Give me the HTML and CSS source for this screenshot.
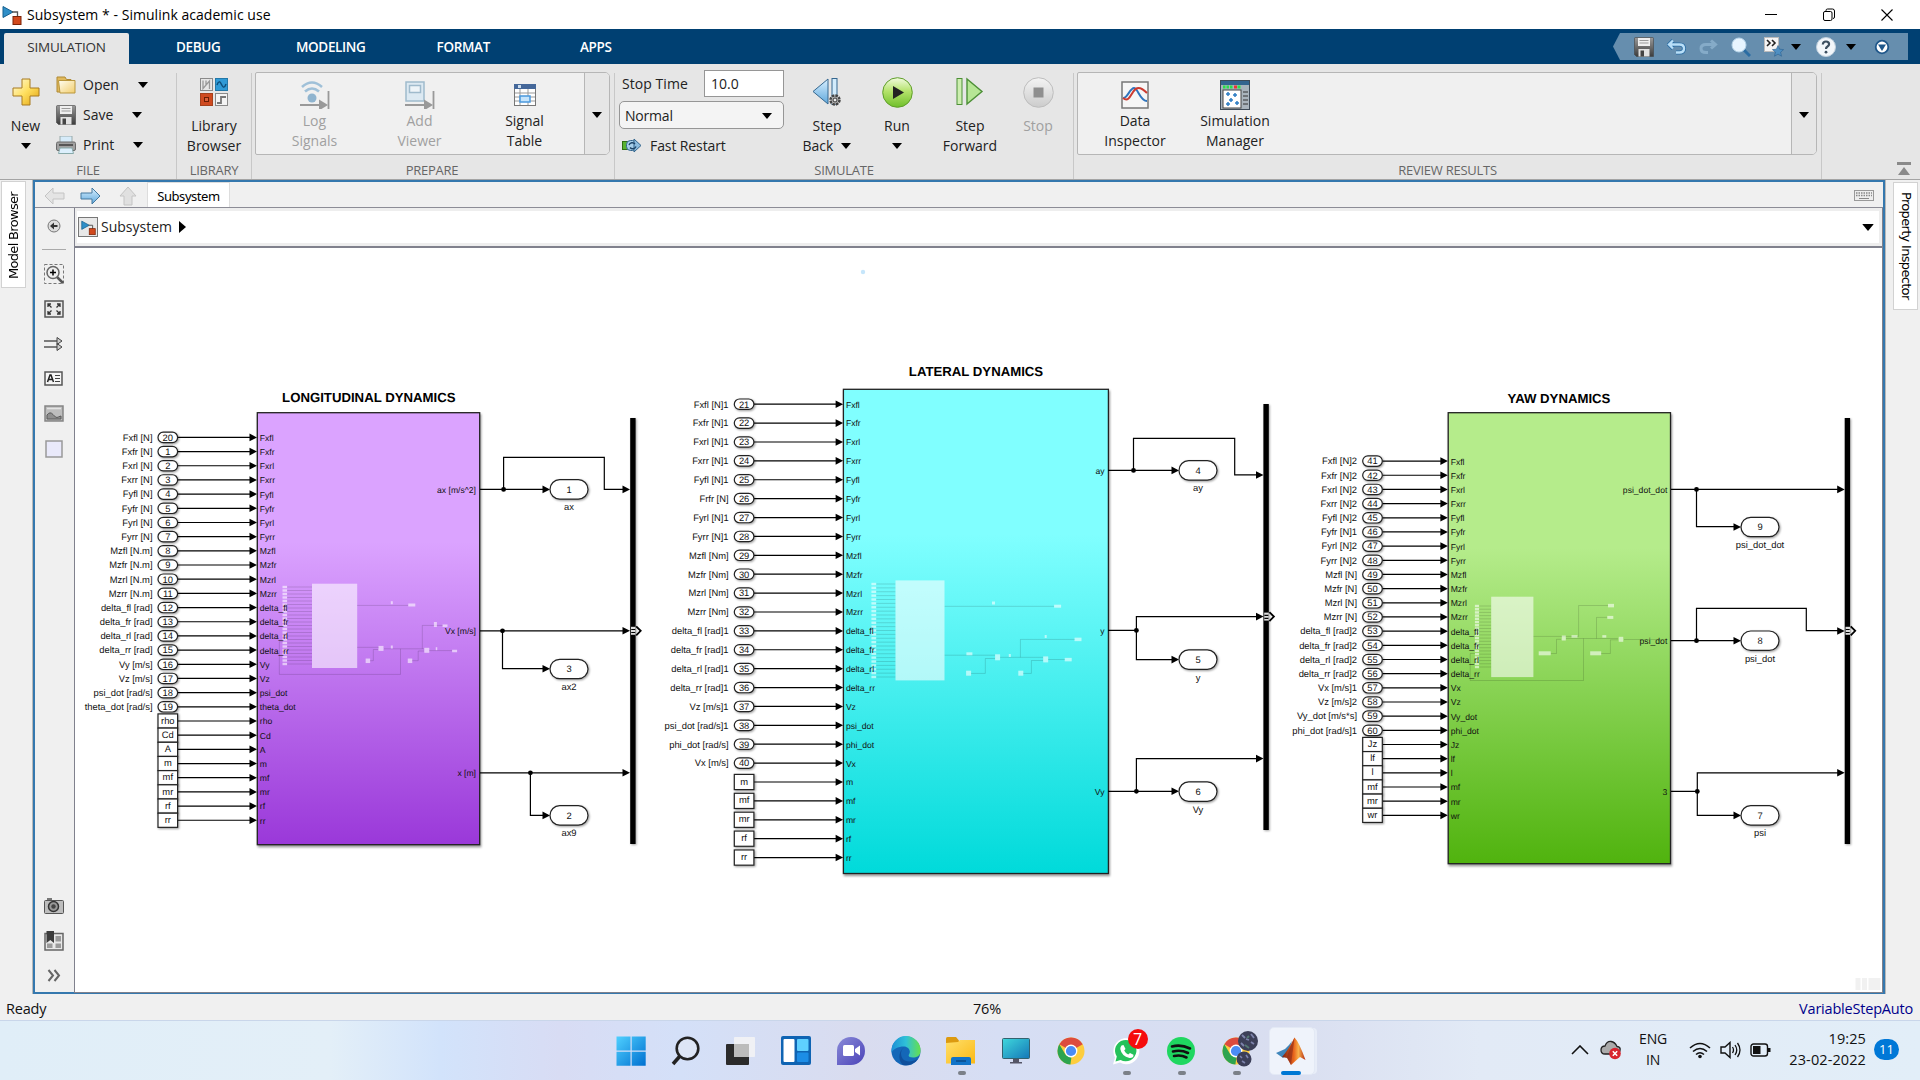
FILE: index.html
```html
<!DOCTYPE html>
<html lang="en">
<head>
<meta charset="utf-8">
<title>Subsystem * - Simulink academic use</title>
<link rel="stylesheet" href="styles.css">
</head>
<body>
<svg class="defs" width="0" height="0">
  <defs>
    <linearGradient id="gold" x1="0" y1="0" x2="1" y2="1"><stop offset="0" stop-color="#fffbe0"/><stop offset=".5" stop-color="#ffdf5e"/><stop offset="1" stop-color="#e0a010"/></linearGradient>
    <linearGradient id="cream" x1="0" y1="0" x2="1" y2="1"><stop offset="0" stop-color="#fffef2"/><stop offset="1" stop-color="#f2cd6c"/></linearGradient>
    <linearGradient id="steel" x1="0" y1="0" x2="0" y2="1"><stop offset="0" stop-color="#9a9a9a"/><stop offset="1" stop-color="#3c3c3c"/></linearGradient>
    <linearGradient id="sky" x1="0" y1="0" x2="0" y2="1"><stop offset="0" stop-color="#d8efff"/><stop offset="1" stop-color="#5fa8dc"/></linearGradient>
    <linearGradient id="lime" x1="0" y1="0" x2="0" y2="1"><stop offset="0" stop-color="#f2fbe0"/><stop offset=".45" stop-color="#b5e36c"/><stop offset="1" stop-color="#6fbf2a"/></linearGradient>
    <linearGradient id="ash" x1="0" y1="0" x2="0" y2="1"><stop offset="0" stop-color="#f4f4f4"/><stop offset="1" stop-color="#cccccc"/></linearGradient>
    <linearGradient id="win" x1="0" y1="0" x2="1" y2="1"><stop offset="0" stop-color="#4fd0ff"/><stop offset="1" stop-color="#0070d0"/></linearGradient>
    <linearGradient id="chatg" x1="0" y1="0" x2="1" y2="1"><stop offset="0" stop-color="#8a8bd8"/><stop offset="1" stop-color="#4a42b8"/></linearGradient>
    <linearGradient id="edgeg" x1="0" y1="0" x2="1" y2="0"><stop offset="0" stop-color="#1b8fd6"/><stop offset=".5" stop-color="#2fc1d8"/><stop offset="1" stop-color="#66e04c"/></linearGradient>
    <linearGradient id="fold" x1="0" y1="0" x2="1" y2="1"><stop offset="0" stop-color="#ffdf6b"/><stop offset="1" stop-color="#fbb914"/></linearGradient>
    <linearGradient id="mon" x1="0" y1="0" x2="1" y2="1"><stop offset="0" stop-color="#3fd8dc"/><stop offset="1" stop-color="#1477b8"/></linearGradient>
    <linearGradient id="mat" x1="0" y1="0" x2="1" y2="0"><stop offset="0" stop-color="#7a2215"/><stop offset=".5" stop-color="#e8641b"/><stop offset=".7" stop-color="#f9b04a"/><stop offset="1" stop-color="#b32a14"/></linearGradient>
    <symbol id="i-model" viewBox="0 0 20 20"><path d="M1 1.500l10 5.500-10 5.500z" fill="#2f8fc8" stroke="#15608f"/><path d="M10 7h5.500v5" fill="none" stroke="#555" stroke-width="1.300"/><rect x="11" y="11.500" width="8" height="8" fill="#d2491d" stroke="#7c2408"/></symbol>
    <symbol id="i-save" viewBox="0 0 20 20"><path d="M.5 1.500q0-1 1-1h17q1 0 1 1v18h-17l-2-2z" fill="url(#steel)" stroke="#444" stroke-width=".6"/><rect x="4" y="1" width="12" height="8" fill="#eee"/><path d="M5.500 3.500h9M5.500 6h9" stroke="#999" stroke-width="1.200"/><rect x="4.500" y="12" width="11" height="7.500" fill="#e2e2e2"/><rect x="6.500" y="13.500" width="3.500" height="6" fill="#444"/></symbol>
    <symbol id="i-caret" viewBox="0 0 10 6"><path d="M0 0h10l-5 6z" fill="#000"/></symbol>
    <symbol id="i-chrome" viewBox="0 0 28 28"><circle cx="14" cy="14" r="13.500" fill="#fdcd3e"/><path d="M14 14L2.300 7.250A13.500 13.500 0 0 1 25.700 7.250z" fill="#dd4b3e"/><path d="M2.300 7.250L8.400 17.500l6 3-1 7A13.500 13.500 0 0 1 2.300 7.250z" fill="#2da44f"/><circle cx="14" cy="14" r="6.400" fill="#fff"/><circle cx="14" cy="14" r="5.100" fill="#4b8cf5"/></symbol>
  </defs>
</svg>

<header class="titlebar">
  <svg class="app-icon" width="20" height="20"><use href="#i-model"/></svg>
  <h1 class="title">Subsystem * - Simulink academic use</h1>
  <div class="win-buttons">
    <svg width="12" height="14"><path d="M0 6.500h12" stroke="#000" stroke-width="1"/></svg>
    <svg width="12" height="14"><rect x=".5" y="3.500" width="8.500" height="9" rx="1.500" fill="none" stroke="#000"/><path d="M3 3.500v-1q0-1.500 1.500-1.500h5q2 0 2 2v6q0 1.500-1.500 1.500" fill="none" stroke="#000"/></svg>
    <svg width="12" height="14"><path d="M.5 1.500l11 11M11.500 1.500l-11 11" stroke="#000" stroke-width="1.100"/></svg>
  </div>
</header>

<nav class="tabs">
  <span class="tab tab-on">SIMULATION</span>
  <span class="tab">DEBUG</span>
  <span class="tab">MODELING</span>
  <span class="tab">FORMAT</span>
  <span class="tab">APPS</span>
  <div class="quick">
    <svg width="20" height="20"><use href="#i-save"/></svg>
    <svg class="q-undo" width="19" height="18" viewBox="0 0 19 18"><path d="M6 2.500L2 6.500l4 4M2.500 6.500h10q4.500 0 4.500 4t-4.500 4H9" fill="none" stroke="#2b6da3" stroke-width="4"/><path d="M6 2.500L2 6.500l4 4M2.500 6.500h10q4.500 0 4.500 4t-4.500 4H9" fill="none" stroke="#b9dff8" stroke-width="2.400"/></svg>
    <svg class="q-redo" width="19" height="18" viewBox="0 0 19 18"><path d="M12 2.500l4.500 4-4.500 4M16 6.500H7q-5 0-5 4t5 4h2" fill="none" stroke="#85abc8" stroke-width="3"/></svg>
    <svg class="q-find" width="20" height="20"><path d="M12 12l7 7" stroke="#2b6da3" stroke-width="3"/><circle cx="8" cy="8" r="7" fill="#e8f5ff" stroke="#b8d6ea"/></svg>
    <svg class="q-fav" width="20" height="20"><rect x=".5" y=".5" width="14" height="14" fill="#f4f4f4" stroke="#bbb"/><path d="M3 3l3 3-3 3M8 3l3 3-3 3" fill="none" stroke="#222" stroke-width="1.600"/><path d="M14 8.500l1.600 3.700 4 .4-3 2.600.9 4-3.500-2.100-3.500 2.100.9-4-3-2.600 4-.4z" fill="#4f8fc2" stroke="#2a5f8f" stroke-width=".6"/></svg>
    <svg class="q-caret" width="10" height="6"><use href="#i-caret"/></svg>
    <svg class="q-help" width="20" height="20"><circle cx="10" cy="10" r="9.500" fill="#f2f6fa" stroke="#c0d0dd"/><path d="M6.800 7.500q.2-3 3.200-3t3.100 2.600q0 1.500-1.600 2.400T10 12" fill="none" stroke="#3d4f60" stroke-width="2.200"/><circle cx="10" cy="15.200" r="1.400" fill="#3d4f60"/></svg>
    <svg class="q-caret2" width="10" height="6"><use href="#i-caret"/></svg>
    <svg class="q-more" width="16" height="16"><circle cx="8" cy="8" r="6.300" fill="#fff" stroke="#1f578a" stroke-width="1.800"/><path d="M4 5.500h8L8 12z" fill="#1f578a"/></svg>
  </div>
</nav>

<section class="ribbon">
  <div class="sec sec-file">
    <div class="sec-body">
      <div class="big big-new">
        <span class="ic"><svg width="28" height="28"><path d="M10 1h8v9h9v8h-9v9h-8v-9H1v-8h9z" fill="url(#gold)" stroke="#a87a20"/></svg></span>
        <span>New</span><svg class="below" width="10" height="6"><use href="#i-caret"/></svg>
      </div>
      <div class="stack">
        <div class="item"><svg width="20" height="18"><path d="M1 1h8l1.500 2.500H15V16H1z" fill="#e0b95c" stroke="#b08a35"/><path d="M4 17L2.500 4.500H19V17z" fill="url(#cream)" stroke="#b9963c"/></svg><span class="w-open">Open</span><svg width="10" height="6"><use href="#i-caret"/></svg></div>
        <div class="item"><svg width="20" height="20"><use href="#i-save"/></svg><span class="w-save">Save</span><svg width="10" height="6"><use href="#i-caret"/></svg></div>
        <div class="item"><svg width="20" height="18"><rect x="4" y="0" width="12" height="7" fill="#d6ebf9" stroke="#9aa"/><rect x=".5" y="6" width="19" height="8.500" rx="1.500" fill="#a0a0a0" stroke="#6a6a6a"/><path d="M3 9h14" stroke="#444" stroke-width="1.600"/><path d="M4 12h12l1.500 5.500h-15z" fill="#dceffc" stroke="#8aa"/></svg><span class="w-print">Print</span><svg width="10" height="6"><use href="#i-caret"/></svg></div>
      </div>
    </div>
    <div class="sec-name">FILE</div>
  </div>
  <div class="sec sec-lib">
    <div class="sec-body"><div class="big big-lib">
      <span class="ic"><svg width="28" height="28"><rect x=".5" y=".5" width="12" height="12" fill="#e6e6e6" stroke="#8a8a8a"/><path d="M3 2.500v8l6.500-7.500v8M6 2.500v5" fill="none" stroke="#999" stroke-width="1.300"/><rect x="15.500" y=".5" width="12" height="12" fill="#2f9ad6" stroke="#2378a8"/><path d="M17 7q2-6 4.500-.5T26 6" fill="none" stroke="#0d4f7c" stroke-width="1.500"/><rect x=".5" y="15.500" width="12" height="12" fill="#cf4a20" stroke="#a5401c"/><rect x="4.500" y="19.500" width="4" height="4" fill="#dd6038" stroke="#6a1d04"/><rect x="15.500" y="15.500" width="12" height="12" fill="#f4f4f4" stroke="#8a8a8a"/><path d="M17 25h4v-6h5" fill="none" stroke="#777" stroke-width="1.800"/></svg></span>
      <span>Library<br>Browser</span></div></div>
    <div class="sec-name">LIBRARY</div>
  </div>
  <div class="sec sec-prep">
    <div class="gallery">
      <div class="g-items">
        <div class="g-btn dim"><span class="ic"><svg width="30" height="28"><path d="M2 6q10-9 20 0M5 10.500q7-6 14 0" fill="none" stroke="#9fc0d8" stroke-width="2.600"/><circle cx="12" cy="17" r="4.500" fill="#8fb4cf"/><path d="M0 24h20M28.500 10v18" stroke="#999" stroke-width="1.800"/><path d="M19 18.500v11l9-5.500z" fill="#999"/></svg></span><span>Log<br>Signals</span></div>
        <div class="g-btn dim"><span class="ic"><svg width="30" height="28"><rect x="1" y="1" width="18" height="19" fill="#dce9f2" stroke="#9fbacc" stroke-width="1.500"/><rect x="4.500" y="4.500" width="11" height="7" fill="#eef4f8" stroke="#9fbacc" stroke-width="1.500"/><path d="M0 24h20M28.500 10v18" stroke="#999" stroke-width="1.800"/><path d="M19 18.500v11l9-5.500z" fill="#999"/></svg></span><span>Add<br>Viewer</span></div>
        <div class="g-btn"><span class="ic"><svg width="22" height="22"><rect x=".5" y=".5" width="21" height="21" fill="#fff" stroke="#777"/><rect x="0" y="0" width="22" height="5" fill="#45689a"/><rect x="4" y="1" width="3" height="3" fill="#cde"/><path d="M1 9h20M1 13h20M1 17h20M6 5v16M14 5v16" stroke="#999"/><rect x="6" y="12" width="10" height="6" fill="#c6e4fb" stroke="#4a98dd" stroke-width="1.500"/></svg></span><span>Signal<br>Table</span></div>
      </div>
      <div class="g-more"><svg width="10" height="6"><use href="#i-caret"/></svg></div>
    </div>
    <div class="sec-name">PREPARE</div>
  </div>
  <div class="sec sec-sim">
    <div class="sec-body">
      <div class="sim-form">
        <div class="row-stop"><label>Stop Time</label><div class="field">10.0</div></div>
        <div class="mode"><span>Normal</span><svg width="10" height="6"><use href="#i-caret"/></svg></div>
        <div class="fast"><svg width="20" height="16"><rect x=".5" y="3.500" width="6" height="8" fill="#59b331" stroke="#2f6d12"/><rect x="4.500" y="2.500" width="10" height="10" rx="4" fill="#a7cfea" stroke="#33658c"/><path d="M12 1l7 6.500-7 6.500z" fill="#8dbde0" stroke="#33658c"/><path d="M7 7a3.500 3.500 0 0 1 6-1M14 8.500a3.500 3.500 0 0 1-6 1" fill="none" stroke="#1d4468" stroke-width="1.400"/></svg><span>Fast Restart</span></div>
      </div>
      <div class="big b-back"><span class="ic"><svg width="30" height="30"><path d="M16 2v25L1 14.500z" fill="url(#sky)" stroke="#35678f"/><rect x="20" y="1.500" width="5" height="26" fill="#d3ecfc" stroke="#35678f"/><circle cx="23" cy="23" r="4.500" fill="#bbb" stroke="#444" stroke-width="2.500" stroke-dasharray="2.500 1"/><circle cx="23" cy="23" r="2" fill="#eee" stroke="#333"/></svg></span><span>Step</span><span class="with-caret">Back<svg width="10" height="6"><use href="#i-caret"/></svg></span></div>
      <div class="big b-run"><span class="ic"><svg width="31" height="31"><circle cx="15.500" cy="15.500" r="14.800" fill="url(#lime)" stroke="#5f9e2a"/><path d="M11 9l11 6.500L11 22z" fill="#222"/></svg></span><span>Run</span><svg class="below" width="10" height="6"><use href="#i-caret"/></svg></div>
      <div class="big b-fwd"><span class="ic"><svg width="28" height="30"><rect x="1" y="1.500" width="5" height="26" fill="#cdeeb0" stroke="#4c8f36"/><path d="M11 2v25L26 14.500z" fill="#b6e695" stroke="#4c8f36" stroke-width="1.400"/></svg></span><span>Step<br>Forward</span></div>
      <div class="big b-stop dim"><span class="ic"><svg width="31" height="31"><circle cx="15.500" cy="15.500" r="14.800" fill="url(#ash)" stroke="#bdbdbd"/><rect x="10.500" y="10.500" width="10" height="10" fill="#8f8f8f"/></svg></span><span>Stop</span></div>
    </div>
    <div class="sec-name">SIMULATE</div>
  </div>
  <div class="sec sec-rev">
    <div class="gallery">
      <div class="g-items">
        <div class="g-btn"><span class="ic"><svg width="28" height="28"><rect x="1" y="1" width="26" height="26" fill="#f6f6f6" stroke="#777" stroke-width="1.500"/><path d="M2 17C6 18 9 7 13 7s6 13 13 13" fill="none" stroke="#2f74bd" stroke-width="2"/><path d="M2 17c5 4 7-1 10-6s7-6 14 1" fill="none" stroke="#cc3a30" stroke-width="2"/></svg></span><span>Data<br>Inspector</span></div>
        <div class="g-btn"><span class="ic"><svg width="30" height="30"><rect x=".5" y=".5" width="29" height="29" fill="#a9b4bd" stroke="#3d4a57"/><rect x="1" y="1" width="28" height="4" fill="#33658f"/><path d="M3 7h10" stroke="#29e04a" stroke-width="3" stroke-dasharray="2.500 1"/><path d="M14 7h3" stroke="#e33" stroke-width="3"/><path d="M17.500 7h3" stroke="#29e04a" stroke-width="3"/><rect x="3" y="10" width="18" height="18" fill="#fff" stroke="#444"/><path d="M8 12v4M6 14h4M15 13v4M13 15h4M11 18v4M9 20h4M8 22v4M6 24h4M17 21v4M15 23h4" stroke="#2d7dc4" stroke-width="1.500"/><path d="M23 12h5M23 16h5M23 20h5M23 24h5" stroke="#333"/></svg></span><span>Simulation<br>Manager</span></div>
      </div>
      <div class="g-more"><svg width="10" height="6"><use href="#i-caret"/></svg></div>
    </div>
    <div class="sec-name">REVIEW RESULTS</div>
  </div>
  <div class="collapse"><svg width="14" height="13"><path d="M0 1.500h14" stroke="#8a8a8a" stroke-width="3"/><path d="M1 13l6-8 6 8z" fill="#8a8a8a"/></svg></div>
</section>

<main class="work">
  <aside class="side side-left"><div class="vtab vtab-left"><span>Model Browser</span></div></aside>
  <div class="frame">
    <div class="doc-tabs">
      <svg class="nav-ic" width="21" height="18"><path d="M1 9l8-8v5h11v6H9v5z" fill="#e4e4e4" stroke="#c4c4c4"/></svg>
      <svg class="nav-ic nav-fwd" width="21" height="18"><path d="M20 9l-8-8v5H1v6h11v5z" fill="url(#sky)" stroke="#44799f"/></svg>
      <svg class="nav-ic nav-up" width="18" height="20"><path d="M9 1l8 9h-4v9H5v-9H1z" fill="#e0e0e0" stroke="#c4c4c4"/></svg>
      <span class="doc-tab">Subsystem</span>
      <svg class="kbd" width="20" height="11"><rect x=".5" y=".5" width="19" height="10" fill="#eee" stroke="#999"/><path d="M2 3h16M2 5.500h16" stroke="#888" stroke-width="1.500" stroke-dasharray="1.500 1"/><path d="M5 8.500h10" stroke="#888"/></svg>
    </div>
    <div class="doc">
      <div class="palette">
        <span class="tool"><svg width="14" height="14"><circle cx="7" cy="7" r="6" fill="#ddd" stroke="#777"/><path d="M10.500 7H5" stroke="#333" stroke-width="2"/><path d="M7 3.500v7L3 7z" fill="#333"/></svg></span>
        <i class="rule"></i>
        <span class="tool"><svg width="20" height="20"><rect x=".5" y=".5" width="19" height="19" fill="none" stroke="#777" stroke-dasharray="3 2"/><path d="M13 13l6 6" stroke="#555" stroke-width="2.500"/><circle cx="9" cy="8.500" r="6" fill="#eee" stroke="#666" stroke-width="1.500"/><path d="M6 8.500h6M9 5.500v6" stroke="#000" stroke-width="1.500"/></svg></span>
        <span class="tool"><svg width="20" height="18"><rect x="1" y="1" width="18" height="16" fill="#e9e9e9" stroke="#555" stroke-width="1.500"/><path d="M4 7V4h3M13 4h3v3M16 11v3h-3M7 14H4v-3M4.500 4.500l3 3M15.500 4.500l-3 3M15.500 13.500l-3-3M4.500 13.500l3-3" fill="none" stroke="#333" stroke-width="1.300"/></svg></span>
        <span class="tool"><svg width="19" height="14"><path d="M0 4h16M0 10h16" stroke="#555" stroke-width="1.300"/><path d="M13 .5L18 4l-5 3.500zM13 6.500l5 3.500-5 3.500z" fill="#ccc" stroke="#444"/></svg></span>
        <span class="tool"><svg width="19" height="15"><rect x="1" y="1" width="17" height="13" fill="#f6f6f6" stroke="#555" stroke-width="1.500"/><path d="M3.500 11L6 4h1l2.500 7M4.500 8.500h4" fill="none" stroke="#222" stroke-width="1.500"/><path d="M11 4.500h5M11 7.500h5M11 10.500h5" stroke="#444"/></svg></span>
        <span class="tool"><svg width="20" height="17"><rect x="1" y="1" width="18" height="15" fill="#bdbdbd" stroke="#858585" stroke-width="1.500"/><path d="M3 3.500h14" stroke="#e4e4e4" stroke-width="1.500"/><path d="M3 10q3-4 6-.5t4 3 4-1.500v3H3z" fill="#8e8e8e" stroke="#5a5a5a"/></svg></span>
        <span class="tool"><svg width="18" height="18"><rect x="1" y="1" width="16" height="16" fill="#e9e9fa" stroke="#999" stroke-width="1.500"/></svg></span>
        <span class="grow"></span>
        <span class="tool"><svg width="20" height="16"><rect x="3" y="0" width="5" height="3" fill="#777"/><rect x=".5" y="2.500" width="19" height="13" rx="1" fill="#bdbdbd" stroke="#555"/><circle cx="9.500" cy="8.500" r="5" fill="#999" stroke="#333" stroke-width="1.500"/><circle cx="9.500" cy="8.500" r="2.200" fill="#444"/></svg></span>
        <span class="tool"><svg width="20" height="20"><rect x="1" y="2.500" width="18" height="16.500" fill="#e8e8e8" stroke="#666" stroke-width="1.500"/><path d="M11.500 5h5.500v5.500h-5.500zM11.500 12.500h5.500V17h-5.500zM3 12.500h5.500V17H3z" fill="#9a9a9a"/><path d="M2.500 0H10v12l-3.700-3L2.500 12z" fill="#3c3c3c"/></svg></span>
        <span class="tool"><svg width="14" height="13"><path d="M1.500 1L6 6.500 1.500 12M7.500 1L12 6.500 7.500 12" fill="none" stroke="#666" stroke-width="2"/></svg></span>
      </div>
      <div class="editor">
        <div class="crumbs">
          <span class="crumb-ic"><svg width="15" height="15"><use href="#i-model"/></svg></span>
          <span class="crumb">Subsystem</span>
          <svg width="7" height="12"><path d="M0 0l7 6-7 6z"/></svg>
          <svg class="crumb-more" width="12" height="7" viewBox="0 0 10 6"><use href="#i-caret"/></svg>
        </div>
        <svg id="canvas" width="1807" height="744" viewBox="75 248 1807 744"></svg>
      </div>
    </div>
  </div>
  <aside class="side side-right"><div class="vtab vtab-right"><span>Property Inspector</span></div></aside>
</main>

<footer class="status"><span>Ready</span><span>76%</span><span class="solver">VariableStepAuto</span></footer>

<div class="taskbar">
  <div class="apps">
    <div class="app"><svg width="30" height="30"><path d="M.5.500h14v14H.5zM15.700.500h14v14h-14zM.5 15.700h14v14H.5zM15.700 15.700h14v14h-14z" fill="url(#win)"/></svg></div>
    <div class="app"><svg width="30" height="30"><path d="M9 20l-7 8" stroke="#222" stroke-width="3.500"/><circle cx="16.500" cy="12.500" r="10.800" fill="#dde5f5" stroke="#222" stroke-width="2.600"/></svg></div>
    <div class="app"><svg width="30" height="30"><rect x="0" y="8" width="23" height="21" rx="1" fill="#2b2b2b"/><rect x="8" y="1" width="21" height="20" rx="1" fill="#f4f4f4" opacity=".85"/><path d="M8 8h15v13H8z" fill="#bcbcbc"/></svg></div>
    <div class="app"><svg width="30" height="29"><rect x="0" y="0" width="30" height="29" rx="2" fill="#0f64b3"/><rect x="2.500" y="3" width="11" height="23" rx="1" fill="#fff"/><rect x="16" y="3" width="11.500" height="12" rx="1" fill="#5fd0ff"/><rect x="16" y="16.500" width="11.500" height="9.500" rx="1" fill="#1c8de6"/></svg></div>
    <div class="app"><svg width="30" height="30"><path d="M1 29V15A14 14 0 1 1 15 29z" fill="url(#chatg)"/><rect x="7" y="9" width="11" height="11" rx="1.500" fill="#fff"/><path d="M19 13l5-3.500v10L19 16z" fill="#fff"/></svg></div>
    <div class="app"><svg width="30" height="30"><circle cx="15" cy="15" r="14.500" fill="#1467b8"/><path d="M.5 14A14.500 14.500 0 0 1 29.500 15c0 5-4 6.500-7.500 6.500-4 0-5-1.500-4-3 2.500-4-1-8-5-8C7 10.500 2 13 .5 17z" fill="url(#edgeg)"/><path d="M10 17c0 8 7 11 17 6A14.500 14.500 0 0 1 12 29C7 25 7 16 13 11q-3 3-3 6z" fill="#0f4f9c"/></svg></div>
    <div class="app"><svg width="30" height="28"><path d="M0 1.500Q0 0 1.500 0H10l3 3.500V8H0z" fill="#dc9a10"/><path d="M0 6l12-1 2-2h15v23.500H0z" fill="url(#fold)"/><path d="M5 28v-6q0-2 2-2h16q2 0 2 2v6z" fill="#1173c8"/><path d="M10 24h10" stroke="#0a4a88" stroke-width="1.500"/></svg><i class="run"></i></div>
    <div class="app"><svg width="28" height="26"><rect x=".5" y=".5" width="27" height="20" rx="1" fill="url(#mon)" stroke="#33626f"/><path d="M11 21h6v3h3v1.500H8V24h3z" fill="#556"/></svg></div>
    <div class="app"><svg width="28" height="28"><use href="#i-chrome"/></svg></div>
    <div class="app"><svg width="28" height="28"><path d="M1 27.500l2-7A13 13 0 1 1 8 25.500z" fill="#fff"/><path d="M3.500 24.500l1.300-5A10.700 10.700 0 1 1 8.600 23z" fill="#25c25b"/><path d="M9.500 8.500l2-.5 2 4-1.300 1.600q1.300 2.700 4 4l1.800-1.700 3.500 1.800q.3 3.500-4 3.300Q9.500 19 8.300 12q-.1-2 1.200-3.500z" fill="#fff"/></svg><b class="badge">7</b><i class="run"></i></div>
    <div class="app"><svg width="28" height="28"><circle cx="14" cy="14" r="14" fill="#1fd760"/><path d="M5 9.500q9-2.500 18 2M6 14.500q8-2 15 1.500M7 19q7-1.500 12.500 1.500" fill="none" stroke="#111" stroke-width="2.600" stroke-linecap="round"/></svg><i class="run"></i></div>
    <div class="app"><svg width="28" height="28"><use href="#i-chrome"/></svg><svg class="avatar" width="26" height="38"><circle cx="15" cy="11" r="10" fill="#3c3f58"/><path d="M9 5l3 3M18 4l3 4M8 13l3 3M18 12l3 2M13 9l3 1" stroke="#7d83ac" stroke-width="1.800"/><path d="M12 15l4 3M16 6l-2 2" stroke="#567a74" stroke-width="1.800"/><circle cx="11" cy="29" r="7.500" fill="#3c3f58"/><path d="M7 26l2 2M13 25l2 3M9 31l3 2" stroke="#7d83ac" stroke-width="1.600"/></svg><i class="run"></i></div>
    <div class="app app-on"><svg width="30" height="28"><path d="M0 16l9-4 4-4 3-4-4 12-5 5z" fill="#3f86bb"/><path d="M6 20Q13 12 18.500.500 23 5 29.500 23L24 20l-9 8-4-7z" fill="url(#mat)"/><path d="M18.500.500Q13 12 11 20l4 8z" fill="#8a2a1a" opacity=".6"/></svg><i class="run run-on"></i></div>
  </div>
  <div class="tray">
    <svg width="18" height="10"><path d="M1 9l8-8 8 8" fill="none" stroke="#111" stroke-width="1.600"/></svg>
    <svg class="cloud" width="22" height="20"><path d="M5 14q-4 0-4-4t4-4Q7 1 11 1.500t6 5q4 .5 3 4-.5 3-3 3.500z" fill="#aaa" stroke="#222" stroke-width="1.300"/><circle cx="15" cy="13.500" r="5.800" fill="#d8232e"/><path d="M12.800 11.300l4.400 4.400M17.200 11.300l-4.400 4.400" stroke="#fff" stroke-width="1.500"/></svg>
    <div class="lang">ENG<br>IN</div>
    <svg class="wifi" width="22" height="18"><path d="M1 7q10-9 20 0M4 10.500q7-6 14 0M7 13.500q4-3.500 8 0" fill="none" stroke="#111" stroke-width="1.600"/><circle cx="11" cy="15.500" r="1.800" fill="#111"/></svg>
    <svg class="vol" width="21" height="18"><path d="M1 6h4l5-4.500v15L5 12H1z" fill="none" stroke="#111" stroke-width="1.400"/><path d="M12.500 6q2 3 0 6M15 4q3.500 5 0 10M17.500 2q5 7 0 14" fill="none" stroke="#111" stroke-width="1.300"/></svg>
    <svg class="bat" width="21" height="14"><rect x="1" y="1" width="16.500" height="12" rx="2.500" fill="none" stroke="#111" stroke-width="1.400"/><rect x="3" y="3" width="7.500" height="8" fill="#111"/><path d="M18 5h2.500v4H18z" fill="#111"/></svg>
    <div class="clock">19:25<br>23-02-2022</div>
    <span class="count">11</span>
  </div>
</div>
<script src="diagram.js"></script>
</body>
</html>
```
FILE: styles.css
```css
* { box-sizing: border-box; }
body {
  margin: 0;
  width: 1920px;
  height: 1080px;
  overflow: hidden;
  display: flex;
  flex-direction: column;
  background: #f0f0f0;
  color: #111;
  font: 14px/20px "Open Sans", "Noto Sans", sans-serif;
}
svg { display: block; flex: none; }
.defs { position: absolute; }

/* Window title */
.titlebar { height: 29px; flex: none; background: #fff; display: flex; align-items: center; padding: 0 27px 0 2px; }
.title { margin: 0 0 0 5px; font-size: 14px; font-weight: 400; letter-spacing: .04px; color: #000; }
.win-buttons { margin-left: auto; display: flex; gap: 46px; }

/* Ribbon tabs */
.tabs { height: 35px; flex: none; background: #004072; display: flex; align-items: flex-end; padding-left: 4px; color: #fff; }
.tab { width: 132.500px; height: 31px; line-height: 28px; text-align: center; font-size: 13.500px; letter-spacing: -.35px; font-weight: 600; }
.tab:nth-child(2) { margin-left: 3px; }
.tab-on { width: 125px; background: #e6e6e6; color: #333; border-radius: 2px 2px 0 0; font-weight: 400; letter-spacing: -.2px; }
.quick { margin: 0 12px 4px auto; width: 295px; height: 27px; background: #668eae; clip-path: polygon(7px 0, 100% 0, 100% 100%, 7px 100%, 0 50%); display: flex; align-items: center; padding-left: 21px; }
.q-undo { margin-left: 13px; }
.q-redo { margin-left: 13px; }
.q-find { margin-left: 13px; }
.q-fav { margin-left: 13px; }
.q-caret { margin-left: 7px; }
.q-help { margin-left: 15px; }
.q-caret2 { margin-left: 10px; }
.q-more { margin-left: 18px; }

/* Ribbon */
.ribbon { height: 116px; flex: none; background: #e6e6e6; border-bottom: 1px solid #a4a4a4; display: flex; color: #222; }
.sec { display: flex; flex-direction: column; border-right: 1px solid transparent; border-image: linear-gradient(transparent 10px, #c8c8c8 10px) 1; }
.sec-file { width: 177px; }
.sec-lib { width: 75px; }
.sec-prep { width: 363px; }
.sec-sim { width: 459px; }
.sec-rev { width: 748px; }
.sec-body { height: 98px; display: flex; }
.sec-name { line-height: 18px; text-align: center; font-size: 13px; letter-spacing: -.25px; color: #666; padding-top: 1px; }
.sec-prep .sec-name { padding-right: 2px; }
.big { padding-top: 11px; display: flex; flex-direction: column; align-items: center; text-align: center; }
.big .ic { height: 34px; margin-bottom: 7px; display: flex; align-items: center; }
.below { margin-top: 7px; }
.dim { color: #a0a0a0; }
.big-new { width: 51px; }
.big-lib { width: 75px; }
.stack { padding: 6px 0 0 5px; }
.item { height: 30px; display: flex; align-items: center; }
.item span { margin-left: 7px; }
.w-open { width: 55px; }
.w-save { width: 49px; }
.w-print { width: 50px; }
.gallery { height: 85px; margin: 8px 4px 5px 3px; border: 1px solid #b6b6b6; border-radius: 2px 5px 5px 2px; background: #f0f0f0; display: flex; }
.g-items { flex: 1; display: flex; padding-left: 6px; }
.g-btn { width: 105px; padding-top: 6px; display: flex; flex-direction: column; align-items: center; text-align: center; }
.g-btn .ic { height: 32px; display: flex; align-items: center; }
.sec-rev .g-items { padding-left: 7px; }
.sec-rev .g-btn { width: 100px; }
.g-more { width: 25px; border-left: 1px solid #b6b6b6; background: #e6e6e6; border-radius: 0 4px 4px 0; display: flex; align-items: center; justify-content: center; padding-top: 2px; }
.sim-form { width: 171px; padding: 6px 0 0 4px; }
.row-stop { display: flex; align-items: center; padding-left: 3px; letter-spacing: .05px; }
.row-stop label { width: 82px; }
.field { width: 80px; height: 27px; border: 1px solid #969696; background: #fff; padding-left: 6px; line-height: 26px; }
.mode { margin-top: 4px; width: 165px; height: 28px; border: 1px solid #969696; border-radius: 5px; background: #f4f4f4; display: flex; align-items: center; justify-content: space-between; padding: 1px 11px 0 5px; letter-spacing: -.2px; }
.fast { margin-top: 7px; display: flex; align-items: center; gap: 8px; padding-left: 3px; letter-spacing: -.1px; }
.b-back { width: 82px; }
.b-run { width: 58px; }
.b-fwd { width: 88px; }
.b-stop { width: 48px; }
.with-caret { display: flex; align-items: center; gap: 8px; }
.collapse { margin: 98px 9px 0 auto; }

/* Work area */
.work { height: 814px; flex: none; display: flex; }
.side { flex: none; }
.side-left { width: 33px; padding: 1px 0 0 1px; border-right: 1px solid #b8b8b8; }
.side-right { width: 35px; padding: 2px 0 0 7px; border-left: 1px solid #b8b8b8; }
.vtab { width: 25px; background: #fff; border: 1px solid #d2d2d2; display: flex; align-items: center; justify-content: center; }
.vtab span { writing-mode: vertical-rl; font: 13px/20px "DejaVu Sans", sans-serif; letter-spacing: -.68px; color: #000; white-space: nowrap; }
.vtab-left { height: 107px; padding-top: 2px; }
.vtab-left span { transform: rotate(180deg); }
.vtab-right { height: 128px; }
.frame { width: 1852px; border: 2px solid #3578ae; display: flex; flex-direction: column; }
.doc-tabs { height: 26px; flex: none; display: flex; align-items: center; padding-left: 9px; border-bottom: 1px solid #8c8c96; }
.nav-ic { margin: 2px 15px 0 0; }
.nav-fwd { margin-right: 18px; }
.nav-up { margin-right: 10px; }
.doc-tab { width: 83px; height: 25px; background: #fff; border: 1px solid #ddd; border-bottom: 0; text-align: center; font: 13px/26px "Noto Sans", sans-serif; letter-spacing: -.45px; color: #000; }
.kbd { margin: 2px 9px 0 auto; }
.doc { flex: 1; display: flex; }
.palette { width: 39px; padding-right: 2px; display: flex; flex-direction: column; align-items: center; }
.tool { height: 35px; display: flex; align-items: center; }
.rule { width: 24px; height: 1px; margin: 6px 0; background: #aaa; }
.grow { flex: 1; }
.editor { flex: 1; border: 1px solid #80818d; border-top: 0; background: #fff; }
.crumbs { height: 38px; border: 3px solid #eee; border-left-width: 2px; display: flex; align-items: center; padding: 0 5px 0 1px; gap: 4px; font-size: 14px; color: #222; }
.crumb-ic { width: 20px; height: 20px; border: 1px solid #777; background: #e8e8e8; padding: 2px; margin-right: -1px; }
.crumb { margin-right: 3px; }
.crumb-more { margin-left: auto; }
#canvas { border-top: 2px solid #80818d; background: #fff; overflow: hidden; height: 746px; }

/* Diagram */
#canvas text { font-family: "Liberation Sans", Arial, sans-serif; font-size: 9.400px; fill: #111; text-rendering: geometricPrecision; }
#canvas .port { font-size: 8.600px; }
#canvas .heading { font-size: 13.200px; font-weight: 700; fill: #000; }
.wire { fill: none; stroke: #000; stroke-width: 1.200; }
.node { fill: #fff; stroke: #222; stroke-width: 1.200; filter: drop-shadow(1px 1.500px .8px rgba(0, 0, 0, .4)); }
.block { stroke: #222; stroke-width: 1.300; filter: drop-shadow(1px 2px 1px rgba(0, 0, 0, .4)); }
.busbar { fill: #000; filter: drop-shadow(1px 1px .8px rgba(0, 0, 0, .35)); }
.mini-wire { fill: none; stroke: #000; stroke-width: .8; opacity: .17; }
.mini-box { fill: #fff; opacity: .58; }

/* Status line */
.status { height: 26px; flex: none; display: grid; grid-template-columns: 1fr auto 1fr; align-items: center; padding: 3px 7px 0 6px; font-size: 14.500px; letter-spacing: -.2px; }
.status span:nth-child(2) { padding-left: 55px; }
.solver { text-align: right; color: #00008b; }

/* Taskbar */
.taskbar { height: 60px; flex: none; display: flex; align-items: center; border-top: 1px solid #c9d6ea; background: linear-gradient(90deg, #e0eef8 0, #e3eff8 330px, #d2e3fb 440px, #d8dcf4 560px, #d4e0f8 680px, #d9dcef 860px, #d6def4 1000px, #d9def0 1280px, #e2eaf6 1480px, #e2eef8 1920px); }
.apps { margin-left: 603.500px; display: flex; }
.app { width: 55px; height: 50px; position: relative; display: flex; align-items: center; justify-content: center; }
.app-on::before { content: ""; position: absolute; inset: 1px 4px 1px 5px; background: #eff3fb; border: 1px solid #e3e9f5; border-radius: 5px; box-shadow: 3px 0 0 -1px #e8edf8; }
.app > svg { position: relative; }
.run { position: absolute; left: 24px; bottom: 1px; width: 8px; height: 4px; border-radius: 2px; background: #7b8088; }
.run-on { left: 17px; width: 20px; background: #0078d4; }
.badge { position: absolute; left: 29px; top: 3px; width: 20px; height: 20px; border-radius: 10px; background: #f50c0c; color: #fff; font: 16px/20px "Open Sans", sans-serif; text-align: center; }
.app > .avatar { position: absolute; left: 24px; top: 4px; }
.tray { margin-left: auto; padding: 0 21px 2px 0; display: flex; align-items: center; line-height: 20.500px; }
.cloud { margin-left: 11px; }
.lang { width: 40px; margin-left: 11px; text-align: center; letter-spacing: -.2px; }
.wifi { margin-left: 16px; }
.vol { margin-left: 9px; }
.bat { margin-left: 9px; }
.clock { width: 95px; text-align: right; font-size: 14.500px; letter-spacing: .1px; white-space: nowrap; }
.count { margin-left: 8px; width: 25px; height: 21px; border-radius: 11px; background: #0078d7; color: #fff; text-align: center; font-size: 13px; line-height: 20px; }
```
FILE: diagram.js
```js
const NS = "http://www.w3.org/2000/svg";
const canvas = document.getElementById("canvas");

function add(name, attrs, content) {
  const el = document.createElementNS(NS, name);
  for (const key in attrs) el.setAttribute(key, attrs[key]);
  if (content !== undefined) el.textContent = content;
  canvas.appendChild(el);
  return el;
}
function text(x, y, value, anchor = "start", kind = "label") {
  add("text", { x, y: y + 3.3, "text-anchor": anchor, class: kind }, value);
}
function wire(d) { add("path", { d, class: "wire" }); }
function arrow(x, y) { add("path", { d: `M${x} ${y}l-7.500 -3.800v7.600z`, fill: "#000" }); }
function dot(x, y) { add("circle", { cx: x, cy: y, r: 2.4 }); }
function pill(x, y, w, h, label) {
  add("rect", { x, y: y - h / 2, width: w, height: h, rx: h / 2, class: "node" });
  text(x + w / 2, y, label, "middle");
}

const plants = [
  {
    title: "LONGITUDINAL DYNAMICS", titleX: 368.8, titleY: 402, x: 257.3, y: 412.7, w: 222.4, h: 432,
    colors: ["#dba3ff", "#9a38d9"], first: 437.4, pitch: 14.18, portX: 158, labelX: 152.5, boxH: 14.18,
    inputs: [["Fxfl [N]", 20, "Fxfl"], ["Fxfr [N]", 1, "Fxfr"], ["Fxrl [N]", 2, "Fxrl"], ["Fxrr [N]", 3, "Fxrr"],
      ["Fyfl [N]", 4, "Fyfl"], ["Fyfr [N]", 5, "Fyfr"], ["Fyrl [N]", 6, "Fyrl"], ["Fyrr [N]", 7, "Fyrr"],
      ["Mzfl [N.m]", 8, "Mzfl"], ["Mzfr [N.m]", 9, "Mzfr"], ["Mzrl [N.m]", 10, "Mzrl"], ["Mzrr [N.m]", 11, "Mzrr"],
      ["delta_fl [rad]", 12, "delta_fl"], ["delta_fr [rad]", 13, "delta_fr"], ["delta_rl [rad]", 14, "delta_rl"], ["delta_rr [rad]", 15, "delta_rr"],
      ["Vy [m/s]", 16, "Vy"], ["Vz [m/s]", 17, "Vz"], ["psi_dot [rad/s]", 18, "psi_dot"], ["theta_dot [rad/s]", 19, "theta_dot"]],
    constants: ["rho", "Cd", "A", "m", "mf", "mr", "rf", "rr"],
    outLabelX: 476, outputs: [["ax [m/s^2]", 489.4], ["Vx [m/s]", 630.8], ["x [m]", 772.8]],
    wires: ["M480 489.400H548", "M503.600 489.400V457.400H604.300V489.400H626", "M480 630.800H626", "M502.500 630.800V668.700H548", "M480 772.800H626", "M530.400 772.800V815.400H548"],
    arrows: [[550, 489.4], [630, 489.4], [630, 630.8], [550, 668.7], [630, 772.8], [550, 815.4]],
    dots: [[503.6, 489.4], [502.5, 630.8], [530.4, 772.8]],
    outX: 550, outports: [[1, "ax", 489.4], [3, "ax2", 669], [2, "ax9", 815.4]],
    bar: [630.2, 418, 426, 630.8],
    mini: {
      main: [312, 583.7, 45.2, 84.3], ports: [282.5, 587, 664, 23, 4.6],
      wires: ["M357 605.400H408", "M357 647.300H379M384 648.800H424M429 650.600H452", "M370 660.700H373.300V649.500H378M412 660.700H418.200V651H424", "M422.300 648.800V625.400H443", "M283 641.700H279.300V674.400H400.500V648.800"],
      boxes: [[391.8, 602.7, 2, 3], [411.8, 605, 7, 3], [381, 648.4, 5, 5], [391.8, 647, 2, 3], [426.8, 650.3, 5, 5], [436.500, 648.7, 1.500, 3], [454.6, 651, 5, 2.5], [367.9, 660.8, 4.500, 4.500], [410, 660.8, 4.500, 4.500], [435.4, 624.5, 3, 5], [445, 625.7, 5, 2.5]]
    }
  },
  {
    title: "LATERAL DYNAMICS", titleX: 976, titleY: 376, x: 843.4, y: 389.3, w: 265, h: 484.2,
    colors: ["#80ffff", "#00dada"], first: 404.2, pitch: 18.89, portX: 734.3, labelX: 728.6, boxH: 15.2,
    inputs: [["Fxfl [N]1", 21, "Fxfl"], ["Fxfr [N]1", 22, "Fxfr"], ["Fxrl [N]1", 23, "Fxrl"], ["Fxrr [N]1", 24, "Fxrr"],
      ["Fyfl [N]1", 25, "Fyfl"], ["Frfr [N]", 26, "Fyfr"], ["Fyrl [N]1", 27, "Fyrl"], ["Fyrr [N]1", 28, "Fyrr"],
      ["Mzfl [Nm]", 29, "Mzfl"], ["Mzfr [Nm]", 30, "Mzfr"], ["Mzrl [Nm]", 31, "Mzrl"], ["Mzrr [Nm]", 32, "Mzrr"],
      ["delta_fl [rad]1", 33, "delta_fl"], ["delta_fr [rad]1", 34, "delta_fr"], ["delta_rl [rad]1", 35, "delta_rl"], ["delta_rr [rad]1", 36, "delta_rr"],
      ["Vz [m/s]1", 37, "Vz"], ["psi_dot [rad/s]1", 38, "psi_dot"], ["phi_dot [rad/s]", 39, "phi_dot"], ["Vx [m/s]", 40, "Vx"]],
    constants: ["m", "mf", "mr", "rf", "rr"],
    outLabelX: 1104.5, outputs: [["ay", 470.3], ["y", 630.4], ["Vy", 791.2]],
    wires: ["M1108 470.400H1177", "M1133.500 470.400V438.300H1234.700V474.800H1260", "M1108 630.400H1136.400M1260 616.600H1136.400V659.600H1177", "M1108 791.300H1177M1136.400 791.300V758.600H1260"],
    arrows: [[1179, 470.4], [1263.5, 475], [1263.5, 616.6], [1179, 659.6], [1179, 791.3], [1263.5, 758.6]],
    dots: [[1133.5, 470.4], [1136.4, 630.4], [1136.4, 791.3]],
    outX: 1179, outports: [[4, "ay", 470.4], [5, "y", 659.6], [6, "Vy", 791.6]],
    bar: [1263.4, 404, 426, 616.6],
    mini: {
      main: [895.5, 580.4, 49, 100], ports: [871.4, 584, 677, 25, 4.8],
      wires: ["M944.500 606.300H1054", "M944.500 655.200H995M1000 657.300H1043M1048 659.500H1065", "M1020.400 657.300V639.400H1075", "M971 673.400H985.300V658.500H995M1023 673.400H1031.400V660.500H1043"],
      boxes: [[993.5, 603, 3, 3], [1057.6, 606.2, 7, 3], [997.6, 657.3, 5, 6], [1009.8, 655.5, 2, 3], [1045.7, 659.4, 5, 6], [1068.2, 659.6, 7, 3.5], [1078, 639.4, 7, 3.5], [1045.7, 636.5, 2, 3], [969.4, 653.8, 6, 3], [968.6, 673.2, 5, 5], [1020.8, 673.2, 5, 5]]
    }
  },
  {
    title: "YAW DYNAMICS", titleX: 1559, titleY: 402.6, x: 1448.2, y: 412.7, w: 222.3, h: 451,
    colors: ["#b5ec8b", "#50b30e"], first: 461.1, pitch: 14.17, portX: 1362.7, labelX: 1357, boxH: 14.17,
    inputs: [["Fxfl [N]2", 41, "Fxfl"], ["Fxfr [N]2", 42, "Fxfr"], ["Fxrl [N]2", 43, "Fxrl"], ["Fxrr [N]2", 44, "Fxrr"],
      ["Fyfl [N]2", 45, "Fyfl"], ["Fyfr [N]1", 46, "Fyfr"], ["Fyrl [N]2", 47, "Fyrl"], ["Fyrr [N]2", 48, "Fyrr"],
      ["Mzfl [N]", 49, "Mzfl"], ["Mzfr [N]", 50, "Mzfr"], ["Mzrl [N]", 51, "Mzrl"], ["Mzrr [N]", 52, "Mzrr"],
      ["delta_fl [rad]2", 53, "delta_fl"], ["delta_fr [rad]2", 54, "delta_fr"], ["delta_rl [rad]2", 55, "delta_rl"], ["delta_rr [rad]2", 56, "delta_rr"],
      ["Vx [m/s]1", 57, "Vx"], ["Vz [m/s]2", 58, "Vz"], ["Vy_dot [m/s*s]", 59, "Vy_dot"], ["phi_dot [rad/s]1", 60, "phi_dot"]],
    constants: ["Jz", "lf", "l", "mf", "mr", "wr"],
    outLabelX: 1667.3, outputs: [["psi_dot_dot", 489.3], ["psi_dot", 641], ["3", 792]],
    wires: ["M1671 489.400H1841", "M1696.500 489.400V526.700H1739", "M1671 640.700H1739M1696.500 640.700V608.400H1806.300V630.700H1841", "M1671 791.400H1697.300M1841 772.800H1697.300V815.400H1739"],
    arrows: [[1844.7, 489.4], [1741, 527], [1741, 640.7], [1844.7, 631], [1844.7, 772.8], [1741, 815.4]],
    dots: [[1696.5, 489.4], [1696.5, 640.7], [1697.3, 791.4]],
    outX: 1741, outports: [[9, "psi_dot_dot", 527], [8, "psi_dot", 640.7], [7, "psi", 815.4]],
    bar: [1844.7, 418, 426, 630.8],
    mini: {
      main: [1491.2, 596.7, 42.2, 80.4], ports: [1474.9, 606, 667, 20, 4.2],
      wires: ["M1533.300 636.400H1578.600V605.500H1608", "M1566 638.500H1618M1624 639.500H1667", "M1596.500 638.500V617.400H1607", "M1551 653.500H1556.500V639.300H1561M1601 653.500H1610.400V639.800H1618", "M1475 653.500H1470.200V680.500H1583.500V638.500"],
      boxes: [[1563.8, 638, 4, 5], [1574.5, 636.4, 6, 2.5], [1621, 639.3, 4.500, 5], [1611, 605.6, 6, 3.5], [1610.3, 617.4, 6, 3], [1604.3, 636.4, 4, 2.5], [1544.7, 653.3, 12, 4], [1595.7, 653.3, 11, 4]]
    }
  }
];

plants.forEach((p, n) => {
  const grad = add("linearGradient", { id: "fill" + n, x1: 0, y1: 0, x2: 0, y2: 1 });
  [[0, p.colors[0]], [0.3, p.colors[0]], [1, p.colors[1]]].forEach(([offset, color]) => {
    const stop = document.createElementNS(NS, "stop");
    stop.setAttribute("offset", offset);
    stop.setAttribute("stop-color", color);
    grad.appendChild(stop);
  });
  add("text", { x: p.titleX, y: p.titleY, "text-anchor": "middle", class: "heading" }, p.title);
  add("rect", { x: p.x, y: p.y, width: p.w, height: p.h, fill: `url(#fill${n})`, class: "block" });

  // Contents preview in the middle of the block
  const m = p.mini;
  const [px, top, bottom, count, pw] = m.ports;
  for (let i = 0; i < count; i++) {
    const y = top + (bottom - top) * i / (count - 1);
    add("rect", { x: px, y: y - 1.2, width: pw, height: 2.4, class: "mini-box" });
    add("path", { d: `M${px + pw} ${y}H${m.main[0]}`, class: "mini-wire" });
  }
  m.wires.forEach(d => add("path", { d, class: "mini-wire" }));
  add("rect", { x: m.main[0], y: m.main[1], width: m.main[2], height: m.main[3], class: "mini-box" });
  m.boxes.forEach(([x, y, w, h]) => add("rect", { x: x - w / 2, y: y - h / 2, width: w, height: h, class: "mini-box" }));

  // Input side
  const rows = p.inputs.length;
  p.inputs.forEach(([label, number, port], i) => {
    const y = p.first + i * p.pitch;
    wire(`M${p.portX + 19.6} ${y}H${p.x - 5}`);
    arrow(p.x - 0.3, y);
    pill(p.portX, y, 19.6, 10.4, number);
    text(p.labelX, y, label, "end");
    text(p.x + 2.5, y + 0.1, port, "start", "port");
  });
  p.constants.forEach((label, i) => {
    const y = p.first + (rows + i) * p.pitch;
    wire(`M${p.portX + 19.6} ${y}H${p.x - 5}`);
    arrow(p.x - 0.3, y);
    add("rect", { x: p.portX, y: y - p.boxH / 2, width: 19.6, height: p.boxH, class: "node" });
    text(p.portX + 9.8, y - 0.7, label, "middle");
    text(p.x + 2.5, y + 0.1, label, "start", "port");
  });

  // Output side
  p.outputs.forEach(([label, y]) => text(p.outLabelX, y, label, "end", "port"));
  p.wires.forEach(wire);
  p.arrows.forEach(([x, y]) => arrow(x, y));
  p.dots.forEach(([x, y]) => dot(x, y));
  p.outports.forEach(([number, label, y]) => {
    pill(p.outX, y, 38, 19.4, number);
    text(p.outX + 19, y + 17.7, label, "middle");
  });
  const [bx, by, bh, mid] = p.bar;
  add("rect", { x: bx, y: by, width: 5.4, height: bh, class: "busbar" });
  add("rect", { x: bx + 0.8, y: mid - 4, width: 4.6, height: 8, fill: "#ddd" });
  wire(`M${bx + 1} ${mid - 1.3}h4M${bx + 1} ${mid + 1.7}h4`);
  add("path", { d: `M${bx + 6} ${mid - 4.5}l4.500 4.500l-4.500 4.500`, fill: "none", stroke: "#000", "stroke-width": 1.8 });
});

add("circle", { cx: 863, cy: 272, r: 2.2, fill: "#c6e6fb" });
add("path", { d: "M1855.500 978h5v12h-5zM1862 978h5v12h-5zM1868.500 978h12v12h-12z", fill: "#f1f1f1" });
```
